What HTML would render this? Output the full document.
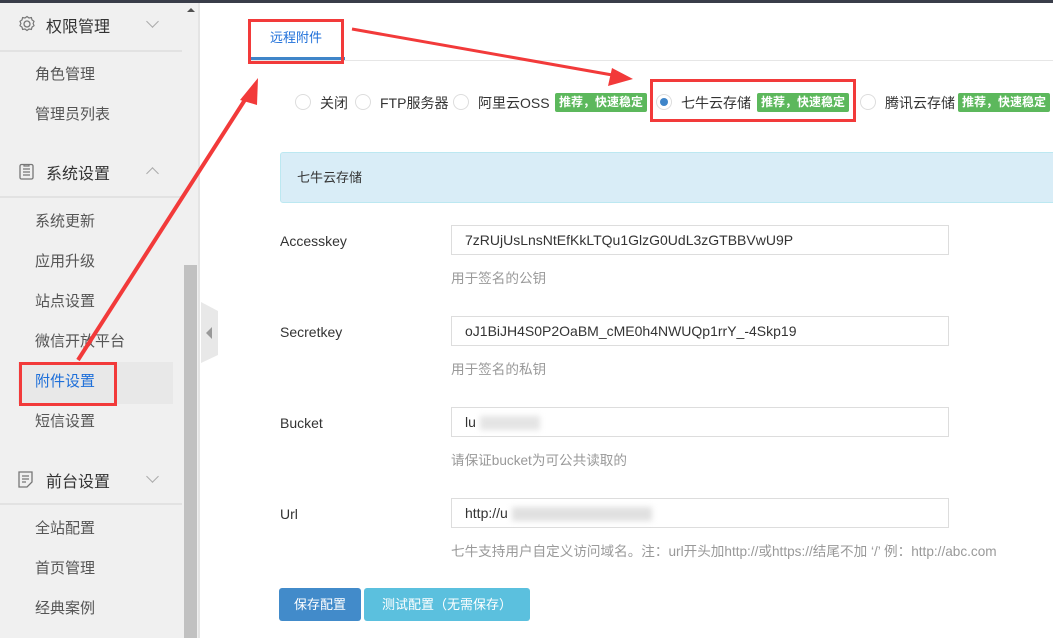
<!DOCTYPE html>
<html><head><meta charset="utf-8"><style>
*{margin:0;padding:0;box-sizing:border-box}
body{width:1053px;height:638px;overflow:hidden;background:#fff;font-family:"Liberation Sans","Noto Sans CJK SC",sans-serif;position:relative;color:#333}
.top{position:absolute;left:0;top:0;width:1053px;height:3px;background:#393d49}
.side{position:absolute;left:0;top:3px;width:183px;height:635px;background:#f0f0f0}
.grp{position:absolute;left:0;width:183px;font-size:16px;color:#333}
.grp .t{position:absolute;left:46px}
.grp .ar{position:absolute;left:148px;top:2px;width:9px;height:9px;border-right:1px solid #aaa;border-bottom:1px solid #aaa}
.sep{position:absolute;left:0;width:182px;height:2px;background:#e2e2e2}
.it{position:absolute;left:35px;font-size:15px;color:#555}
.track{position:absolute;left:183px;top:3px;width:15px;height:635px;background:#f0f0f0}
.thumb{position:absolute;left:184px;top:265px;width:13px;height:373px;background:#c1c1c1}
.bd{position:absolute;left:198px;top:3px;width:2px;height:635px;background:#e4e4e4}
.tabline{position:absolute;left:250px;top:60px;width:803px;height:1px;background:#e6e6e6}
.tab{position:absolute;left:270px;top:27px;font-size:13px;color:#1e6fd9}
.tabu{position:absolute;left:251px;top:57px;width:94px;height:3px;background:#3f85c9}
.r{position:absolute;top:94px;width:16px;height:16px;border:1px solid #ddd;border-radius:50%;background:#fff}
.rl{position:absolute;top:93px;font-size:14px;color:#333}
.badge{position:absolute;top:93px;height:19px;background:#5cb85c;color:#fff;font-size:12px;font-weight:bold;line-height:19px;padding:0 4px;border-radius:2px}
.info{position:absolute;left:280px;top:152px;width:780px;height:51px;background:#d9edf7;border:1px solid #bce8f1;border-radius:3px;font-size:13px;line-height:49px;padding-left:16px}
.lab{position:absolute;left:280px;font-size:14px;color:#333}
.inp{position:absolute;left:451px;width:498px;height:30px;border:1px solid #ddd;font-size:14px;line-height:28px;padding-left:13px;color:#333}
.hint{position:absolute;left:451px;font-size:13.6px;color:#999;white-space:nowrap}
.btn{position:absolute;top:588px;height:33px;color:#fff;font-size:13px;line-height:33px;text-align:center;border-radius:3px}
</style></head><body>
<div class="top"></div>
<div class="side"></div>
<div class="grp" style="top:13px"><svg style="position:absolute;left:18px;top:2px" width="18" height="18" viewBox="0 0 18 18"><circle cx="9" cy="9" r="3" fill="none" stroke="#777" stroke-width="1.3"/><path d="M9 1.5l2 1.5 2.4-.4.6 2.3 2 1.4-.9 2.2.9 2.2-2 1.4-.6 2.3-2.4-.4-2 1.5-2-1.5-2.4.4-.6-2.3-2-1.4.9-2.2-.9-2.2 2-1.4.6-2.3 2.4.4z" fill="none" stroke="#777" stroke-width="1.2"/></svg><span class="t">权限管理</span><span class="ar" style="transform:rotate(45deg);top:4px"></span></div>
<div class="sep" style="top:50px"></div>
<div class="it" style="top:63px">角色管理</div>
<div class="it" style="top:103px">管理员列表</div>
<div class="grp" style="top:160px"><svg style="position:absolute;left:19px;top:3px" width="15" height="17" viewBox="0 0 15 17"><rect x="1" y="1.5" width="13" height="14.5" rx="1.5" fill="none" stroke="#777" stroke-width="1.3"/><path d="M4 6h7M4 9h7M4 12h7M5 1v2h5V1" stroke="#777" stroke-width="1.2" fill="none"/></svg><span class="t">系统设置</span><span class="ar" style="transform:rotate(-135deg);top:9px"></span></div>
<div class="sep" style="top:196px"></div>
<div class="it" style="top:210px">系统更新</div>
<div class="it" style="top:250px">应用升级</div>
<div class="it" style="top:290px">站点设置</div>
<div class="it" style="top:330px">微信开放平台</div>
<div style="position:absolute;left:18px;top:362px;width:155px;height:42px;background:#e8e8e8"></div>
<div class="it" style="top:370px;color:#1e6fd9">附件设置</div>
<div class="it" style="top:410px">短信设置</div>
<div class="grp" style="top:468px"><svg style="position:absolute;left:18px;top:3px" width="15" height="17" viewBox="0 0 15 17"><path d="M1 1h13v10l-5 5H1z" fill="none" stroke="#777" stroke-width="1.3"/><path d="M4 5h7M4 8h7M4 11h4" stroke="#777" stroke-width="1.2"/></svg><span class="t">前台设置</span><span class="ar" style="transform:rotate(45deg);top:4px"></span></div>
<div class="sep" style="top:503px"></div>
<div class="it" style="top:517px">全站配置</div>
<div class="it" style="top:557px">首页管理</div>
<div class="it" style="top:597px">经典案例</div>
<div class="track"></div>
<div class="thumb"></div>
<div style="position:absolute;left:187px;top:8px;width:0;height:0;border-left:4px solid transparent;border-right:4px solid transparent;border-bottom:4px solid #505050"></div>
<div class="bd"></div>
<svg style="position:absolute;left:201px;top:302px" width="18" height="62"><path d="M0 0L17 9V53L0 61z" fill="#e8e8e8"/><path d="M5 31l6-6v12z" fill="#999"/></svg>

<div class="tabline"></div>
<div class="tab">远程附件</div>
<div class="tabu"></div>

<div class="r" style="left:295px"></div><div class="rl" style="left:320px">关闭</div>
<div class="r" style="left:355px"></div><div class="rl" style="left:380px">FTP服务器</div>
<div class="r" style="left:453px"></div><div class="rl" style="left:478px">阿里云OSS</div>
<div class="badge" style="left:555px">推荐，快速稳定</div>
<div class="r" style="left:656px"><div style="position:absolute;left:3px;top:3px;width:8px;height:8px;border-radius:50%;background:#3f85c9"></div></div>
<div class="rl" style="left:681px">七牛云存储</div>
<div class="badge" style="left:757px">推荐，快速稳定</div>
<div class="r" style="left:860px"></div><div class="rl" style="left:885px">腾讯云存储</div>
<div class="badge" style="left:958px">推荐，快速稳定</div>

<div class="info">七牛云存储</div>

<div class="lab" style="top:233px">Accesskey</div>
<div class="inp" style="top:225px">7zRUjUsLnsNtEfKkLTQu1GlzG0UdL3zGTBBVwU9P</div>
<div class="hint" style="top:267px">用于签名的公钥</div>
<div class="lab" style="top:324px">Secretkey</div>
<div class="inp" style="top:316px">oJ1BiJH4S0P2OaBM_cME0h4NWUQp1rrY_-4Skp19</div>
<div class="hint" style="top:358px">用于签名的私钥</div>
<div class="lab" style="top:415px">Bucket</div>
<div class="inp" style="top:407px">lu<span style="display:inline-block;width:60px;height:14px;background:#e4e4e4;vertical-align:middle;margin-left:4px;filter:blur(3px)"></span></div>
<div class="hint" style="top:449px">请保证bucket为可公共读取的</div>
<div class="lab" style="top:506px">Url</div>
<div class="inp" style="top:498px">http://u<span style="display:inline-block;width:140px;height:14px;background:#e0e0e0;vertical-align:middle;margin-left:4px;filter:blur(3px)"></span></div>
<div class="hint" style="top:540px">七牛支持用户自定义访问域名。注：url开头加http://或https://结尾不加 ‘/’ 例：http://abc.com</div>

<div class="btn" style="left:279px;width:82px;background:#428bca">保存配置</div>
<div class="btn" style="left:364px;width:166px;background:#5bc0de">测试配置（无需保存）</div>

<svg style="position:absolute;left:0;top:0" width="1053" height="638">
<g fill="none" stroke="#f23a3a" stroke-width="3">
<rect x="249.5" y="20.5" width="93" height="42"/>
<rect x="651.5" y="80.5" width="203" height="40"/>
<rect x="20.5" y="363.5" width="95" height="41"/>
<path d="M78 360L250 92" stroke-width="4"/>
<path d="M352 29L618 76" stroke-width="3"/>
</g>
<path d="M258 78L240 100L257 105z" fill="#f23a3a"/>
<path d="M633 79L612 68L608 86z" fill="#f23a3a"/>
</svg>
</body></html>
